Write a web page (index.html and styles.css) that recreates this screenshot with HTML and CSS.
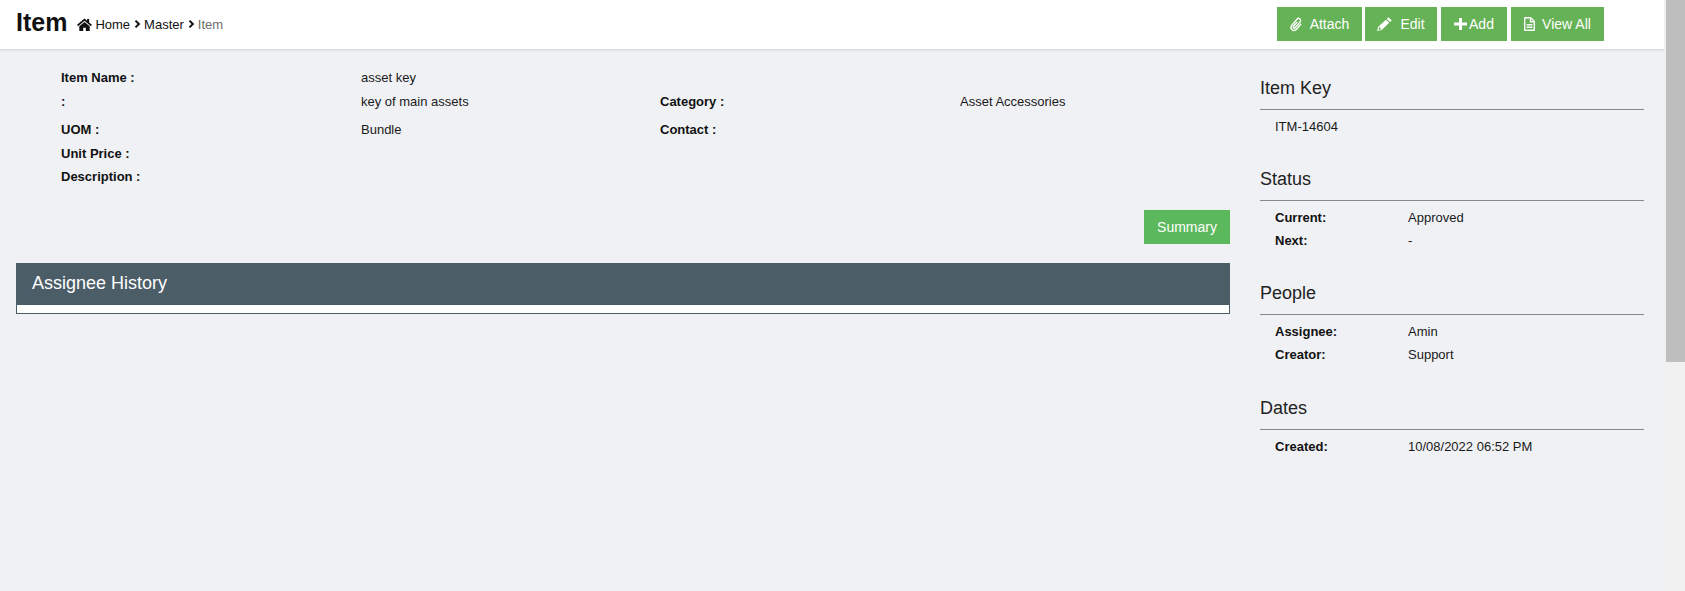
FILE: index.html
```html
<!DOCTYPE html>
<html lang="en">
<head>
<meta charset="utf-8">
<title>Item</title>
<link rel="stylesheet" href="styles.css">
</head>
<body>
<div class="viewport">
  <div class="page">
    <header class="topbar">
      <div class="crumbs">
        <h1 class="title">Item</h1>
        <svg class="home" viewBox="0 0 16 14"><path d="M8 .6 0 7.4l1.1 1.4L8 3l6.9 5.8L16 7.4l-3-2.6V1h-2.2v1.9zM8 4.2 2.4 9v5h4.2v-3.4h2.8V14h4.2V9z"/></svg>
        <span class="crumb">Home</span>
        <svg class="chev" viewBox="0 0 7 10"><path d="M1.5 1.6 4.9 5 1.5 8.4" /></svg>
        <span class="crumb">Master</span>
        <svg class="chev" viewBox="0 0 7 10"><path d="M1.5 1.6 4.9 5 1.5 8.4" /></svg>
        <span class="crumb muted">Item</span>
      </div>
      <div class="actions">
        <a class="btn b-attach"><svg class="ic" viewBox="0 0 13 15"><path class="line" transform="rotate(40 6.5 7.5)" d="M9.6 4v7.2a3.1 3.1 0 0 1-6.2 0V3.2a2.1 2.1 0 0 1 4.2 0v7.6a1.1 1.1 0 0 1-2.2 0V5"/></svg>Attach</a>
        <a class="btn b-edit"><svg class="ic" viewBox="0 0 15 14"><path fill-rule="evenodd" d="M11.4.3l3.3 3.1-1.6 1.6-3.3-3.1zM8.9 2.7l3.3 3.1-7.5 7.2L0 14l1.3-4.3zM2.4 10.2l-.8 2.6 1.2.3.9-.9-.2-1.4z"/></svg>Edit</a>
        <a class="btn b-add"><svg class="ic" viewBox="0 0 13 12"><path d="M5 0h3v4.5h5v3H8V12H5V7.5H0v-3h5z"/></svg>Add</a>
        <a class="btn b-view"><svg class="ic" viewBox="0 0 11 14"><path fill-rule="evenodd" d="M1 0h6l4 4v9a1 1 0 0 1-1 1H1a1 1 0 0 1-1-1V1a1 1 0 0 1 1-1zm.4 1.4v11.2h8.2V5.4H5.8v-4zM7.2 1.9v2.1h2.1zM2.6 7h5.8v1.4H2.6zm0 2.6h5.8V11H2.6z"/></svg>View All</a>
      </div>
    </header>
    <main class="content">
      <section class="left">
        <div class="fields">
          <div class="f-row r1"><b>Item Name :</b><span>asset key</span><b></b><span></span></div>
          <div class="f-row r2"><b>:</b><span>key of main assets</span><b>Category :</b><span>Asset Accessories</span></div>
          <div class="f-row r3"><b>UOM :</b><span>Bundle</span><b>Contact :</b><span></span></div>
          <div class="f-row r4"><b>Unit Price :</b><span></span><b></b><span></span></div>
          <div class="f-row r5"><b>Description :</b><span></span><b></b><span></span></div>
        </div>
        <div class="summary-row"><a class="summary">Summary</a></div>
        <div class="panel">
          <div class="panel-head">Assignee History</div>
          <div class="panel-body"></div>
        </div>
      </section>
      <aside class="side">
        <div class="block k1">
          <h2>Item Key</h2>
          <div class="rows"><div class="kv single"><span>ITM-14604</span></div></div>
        </div>
        <div class="block k2">
          <h2>Status</h2>
          <div class="rows">
            <div class="kv"><b>Current:</b><span>Approved</span></div>
            <div class="kv"><b>Next:</b><span>-</span></div>
          </div>
        </div>
        <div class="block k3">
          <h2>People</h2>
          <div class="rows">
            <div class="kv"><b>Assignee:</b><span>Amin</span></div>
            <div class="kv"><b>Creator:</b><span>Support</span></div>
          </div>
        </div>
        <div class="block k4">
          <h2>Dates</h2>
          <div class="rows">
            <div class="kv"><b>Created:</b><span>10/08/2022 06:52 PM</span></div>
          </div>
        </div>
      </aside>
    </main>
  </div>
  <div class="scrollbar"><div class="thumb"></div></div>
</div>
</body>
</html>
```
FILE: styles.css
```css
* { box-sizing: border-box; }
html, body { margin: 0; height: 100%; overflow: hidden; }
body { font-family: "Liberation Sans", Arial, sans-serif; font-size: 13px; color: #1a1a1a; background: #f0f1f5; }
.viewport { display: flex; height: 591px; }
.page { width: 1666px; flex: none; }
.scrollbar { flex: 1; background: #f1f1f1; }
.thumb { height: 362px; background: #bebebe; }
.topbar { height: 50px; width: 1664px; background: #fff; border-bottom: 1px solid #d9d9d9; box-shadow: 0 1px 2px rgba(0,0,0,.06); display: flex; align-items: flex-start; padding: 0 0 0 16px; }
.crumbs { display: flex; align-items: center; height: 48px; flex: none; width: 1261px; }
.title { margin: 0 10px 0 0; font-size: 25px; font-weight: 700; color: #111; line-height: 1; position: relative; top: -2px; }
.home { width: 15px; height: 13px; fill: #111; margin-right: 3px; }
.crumb { font-size: 13px; color: #111; }
.crumb.muted { color: #6c6c6c; }
.chev { width: 7px; height: 10px; fill: none; stroke: #111; stroke-width: 2; margin: 0 3px 0 4px; }
.actions { display: flex; padding-top: 7px; }
.btn { height: 34px; background: #66b256; color: #fff; font-size: 14px; display: flex; align-items: center; justify-content: center; }
.ic { fill: #fff; flex: none; overflow: visible; }
.ic .line { fill: none; stroke: #fff; stroke-width: 1.4; }
.b-attach { width: 85px; margin-right: 3px; }
.b-attach .ic { width: 13px; height: 15px; margin-right: 7px; }
.b-edit { width: 72px; margin-right: 4px; }
.b-edit .ic { width: 15px; height: 14px; margin-right: 8px; }
.b-add { width: 66px; margin-right: 4px; }
.b-add .ic { width: 13px; height: 12px; margin-right: 2px; }
.b-view { width: 93px; }
.b-view .ic { width: 11px; height: 14px; margin-right: 7px; }
.content { display: flex; padding: 0 0 0 16px; }
.left { width: 1214px; flex: none; }
.fields { padding: 20px 0 0 45px; }
.f-row { display: grid; grid-template-columns: 300px 299px 300px 1fr; line-height: 15px; }
.f-row b { font-weight: 700; color: #111; }
.r1 { height: 23px; }
.r2 { height: 23px; padding-top: 1px; }
.r3 { height: 26px; padding-top: 6px; }
.r4 { height: 23px; padding-top: 4px; }
.r5 { height: 23px; padding-top: 4px; }
.summary-row { display: flex; justify-content: flex-end; padding-top: 22px; }
.summary { width: 86px; height: 34px; background: #5cb85c; color: #fff; font-size: 14px; display: flex; align-items: center; justify-content: center; }
.panel { margin-top: 19px; border: 1px solid #4b5d67; border-top: none; }
.panel-head { height: 42px; margin: 0 -1px; background: #4b5d67; color: #fff; font-size: 18px; display: flex; align-items: center; padding: 0 0 2px 16px; }
.panel-body { height: 8px; background: #fff; }
.side { margin-left: 30px; width: 384px; }
.block h2 { margin: 0; font-size: 18px; font-weight: 400; color: #222; line-height: 21px; padding: 28px 0 10px; border-bottom: 1px solid #888; }
.rows { padding: 5px 0 0 15px; }
.kv { display: grid; grid-template-columns: 133px 1fr; height: 23px; align-items: center; }
.kv.single { grid-template-columns: 1fr; }
.kv b { font-weight: 700; color: #111; }
.k1 { height: 91px; }
.k2 { height: 114px; }
.k3 { height: 115px; }
```
